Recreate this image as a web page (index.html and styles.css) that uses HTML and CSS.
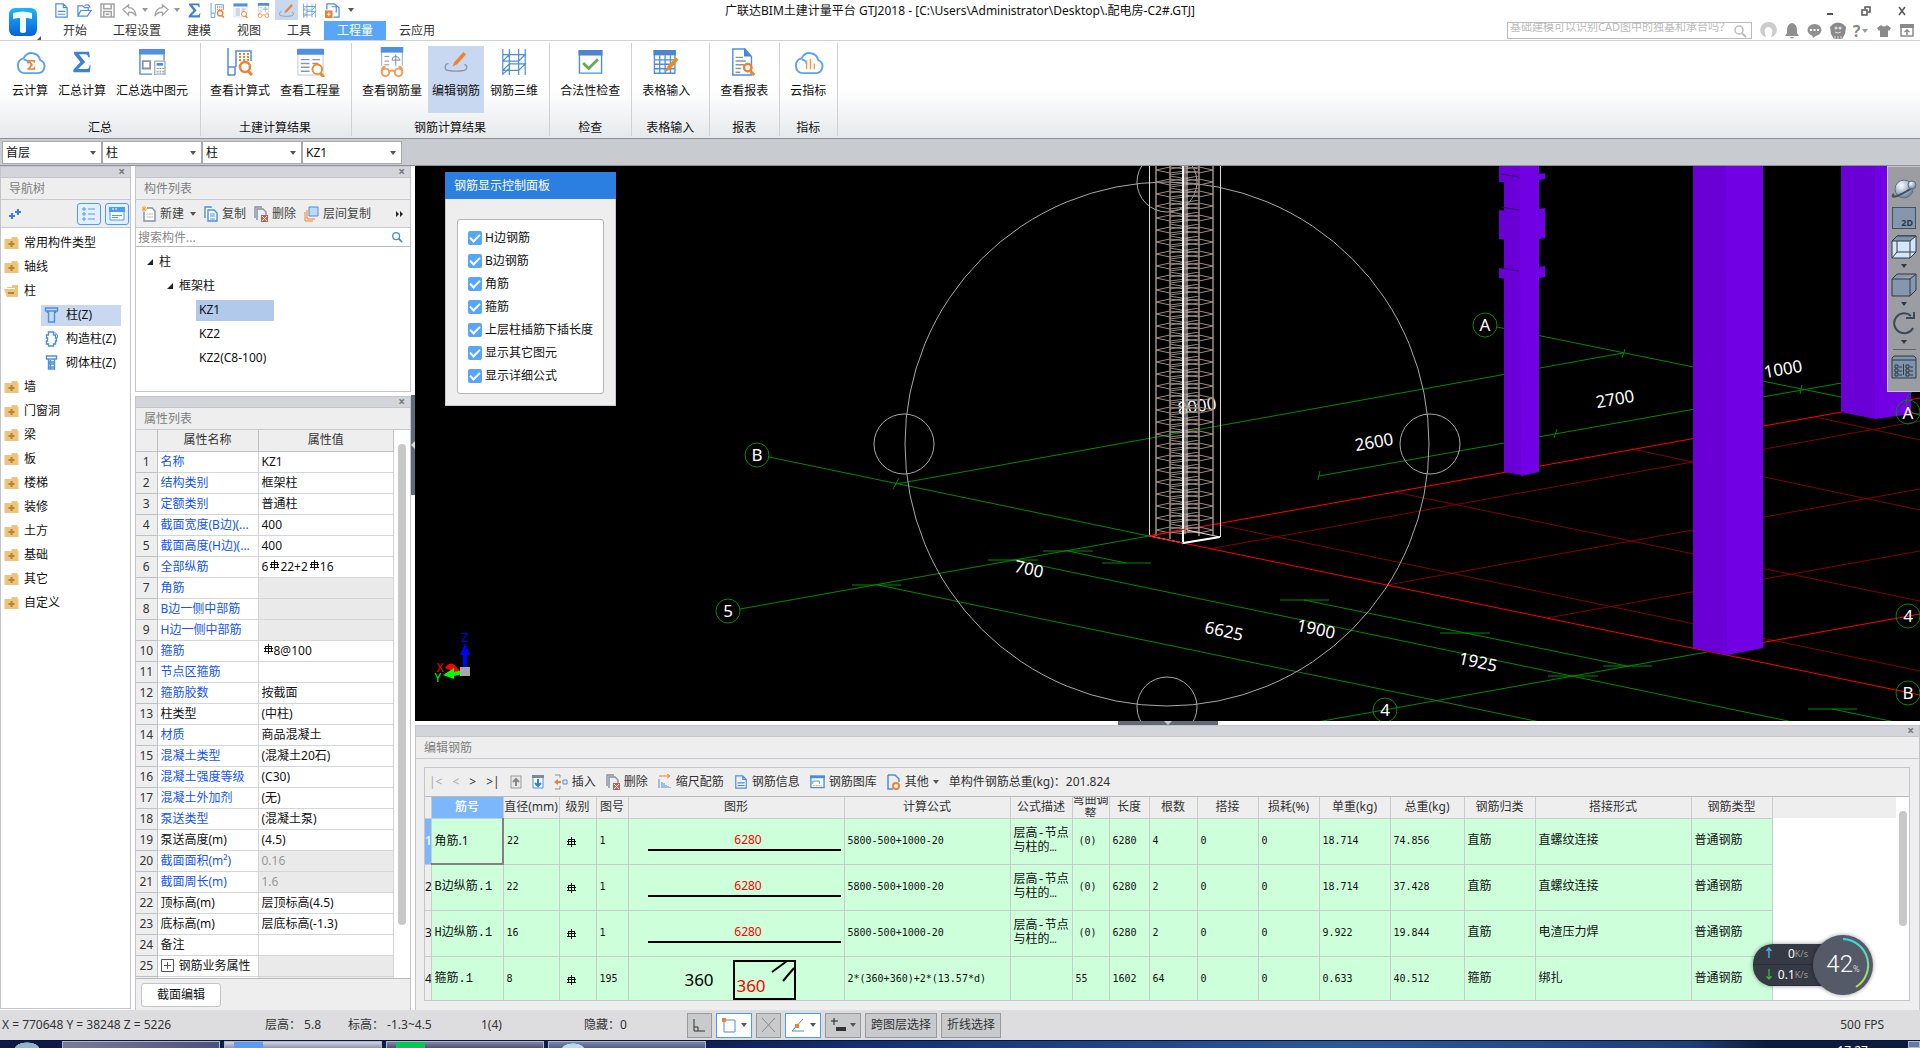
FILE: index.html
```html
<!DOCTYPE html>
<html lang="zh-CN">
<head>
<meta charset="utf-8">
<title>广联达BIM土建计量平台 GTJ2018</title>
<link rel="stylesheet" href="styles.css">
</head>
<body>
<svg class="defs" width="0" height="0" aria-hidden="true">
  <defs>
    <linearGradient id="g-logo" x1="0" y1="0" x2="0" y2="1"><stop offset="0" stop-color="#19b8f8"/><stop offset="1" stop-color="#0a5fd8"/></linearGradient>
    <radialGradient id="g-planet" cx=".35" cy=".3" r=".8"><stop offset="0" stop-color="#fff"/><stop offset=".5" stop-color="#a9b8c8"/><stop offset="1" stop-color="#5f7389"/></radialGradient>
    <linearGradient id="g-arc" x1="0" y1="0" x2="0" y2="1"><stop offset="0" stop-color="#35d6e6"/><stop offset="1" stop-color="#b8e04a"/></linearGradient>
    <pattern id="p-stirrup" patternUnits="userSpaceOnUse" x="1149" y="164" width="72" height="12">
      <g fill="none" stroke="#9a8882" stroke-width="1">
        <path d="M7 6 L21 3 L36 5 M7 6 L21 9 L36 7 M64 6 L50 3 L36 5 M64 6 L50 9 L36 7 M21 0 L50 5 M50 0 L21 5 M21 11 L50 7"/>
      </g>
    </pattern>
    <symbol id="folder" viewBox="0 0 14 14"><path d="M7 1h6v2H7zM0 3h14v10H0z" fill="#ecc57c"/><path d="M7 5v6M4 8h6" stroke="#b5852f" stroke-width="2"/></symbol>
    <symbol id="folder-open" viewBox="0 0 15 14"><path d="M8 1h6v11h-3V4H3V3h5z" fill="#ecc57c"/><path d="M0 5h12l2 8H3z" fill="#ecc57c"/><path d="M4 9h6" stroke="#b5852f" stroke-width="2"/></symbol>
    <symbol id="rebar" viewBox="0 0 10 10"><path d="M5.500 0v10M2.500 2v6M8.500 2v6M2 2.500h7M1 4.500h9M1 7.500h9" fill="none" stroke="#111" stroke-width="1"/></symbol>
    <symbol id="sigma" viewBox="0 0 24 28"><path d="M2 1h19l1 7h-2c-1-4-2-4-5-4H8l8 10-9 9h9c4 0 5-1 6-5h1l-1 9H1v-3l9-10L2 4z" fill="#3f82cf"/></symbol>
    <symbol id="cloud" viewBox="0 0 32 28"><path d="M9 25h15a7 7 0 0 0 2-13.500A9 9 0 0 0 9 9.500 8 8 0 0 0 9 25M9 11q4 0 5 4" fill="none" stroke="#5ba2f0" stroke-width="2"/></symbol>
    <symbol id="calc-lens" viewBox="0 0 28 28"><path d="M2 0v27h7M2 19h7v8M10 19V3h15v10" fill="none" stroke="#4d8edb" stroke-width="1.500"/><path d="M13 6h10M13 9h10M13 12h10" stroke="#f0822e" stroke-width="2" stroke-dasharray="2 2"/><circle cx="19" cy="19" r="5" fill="#fff" stroke="#f0822e" stroke-width="2.500"/><path d="M22 23l4 4" stroke="#f0822e" stroke-width="3"/></symbol>
    <symbol id="doc-lens" viewBox="0 0 30 30"><path d="M2 1h26v27H2z" fill="#fff" stroke="#b9cbe0"/><path d="M1 1h28v6H1z" fill="#5190e0"/><path d="M5 12h9M5 16h9M5 20h9M5 24h9M17 12h8M17 16h6" stroke="#8a96a6" stroke-width="1.500"/><circle cx="22" cy="22" r="5" fill="#fff" stroke="#f0892e" stroke-width="2"/><path d="M25 26l4 4" stroke="#f0892e" stroke-width="3"/></symbol>
    <symbol id="doc-glasses" viewBox="0 0 28 32"><path d="M3 20V1h22v19" fill="#fff" stroke="#7ea6d8"/><path d="M2 0h24v6H2z" fill="#5190e0"/><path d="M6 10h5M6 15h5M6 19h5M18 8v12M14 14q0-4 4-4t4 4M14 14h9" fill="none" stroke="#77889a" stroke-width="1"/><g fill="none" stroke="#f59a55" stroke-width="2"><circle cx="7" cy="27" r="4"/><circle cx="21" cy="27" r="4"/><path d="M11 26q3-2 6 0M3 26q0-5 4-5M25 26q0-5-4-5"/></g></symbol>
    <symbol id="pen" viewBox="0 0 28 24"><path d="M5 14q-4 0-4 4t3 4q10 2 20 0 3-1 3-4t-3-3" fill="none" stroke="#8a95a3" stroke-width="1.500"/><path d="M10 17l2-5L23 0l3 3-11 12z" fill="#f0822e"/></symbol>
    <symbol id="mesh" viewBox="0 0 28 30"><path d="M2 1v28M9 1v28M19 1v28M26 1v28M2 7h24M2 14h17l7-7H9l-7 7M2 24h17l7-7H9l-7 7M2 28l7-6" fill="none" stroke="#4d8edb" stroke-width="1.300"/></symbol>
    <symbol id="check-doc" viewBox="0 0 26 26"><path d="M1 1h24v24H1z" fill="#fff" stroke="#4d8edb" stroke-width="1.500"/><path d="M0 0h26v6H0z" fill="#4a86cf"/><path d="M5 14l6 6L21 10" fill="none" stroke="#6aa84f" stroke-width="3"/></symbol>
    <symbol id="grid-pen" viewBox="0 0 28 28"><path d="M1 1h23v25H1zM1 11h23M1 16h23M1 21h23M7 6v20M13 6v20M19 6v20" fill="none" stroke="#4d8edb" stroke-width="1.500"/><path d="M0 0h25v6H0z" fill="#4a86cf"/><path d="M13 25l2-6L25 8l3 3-10 11z" fill="#f08a1e"/></symbol>
    <symbol id="report" viewBox="0 0 26 30"><path d="M1 1h13l7 8v20H1z" fill="#fff" stroke="#4d8edb" stroke-width="1.500"/><path d="M13 0l8 9h-8z" fill="#4a86cf"/><path d="M4 10h8M4 14h11M4 18h9M4 22h6M4 26h5" stroke="#8a95a3" stroke-width="1.500"/><circle cx="17" cy="21" r="4" fill="#fff" stroke="#f07f2e" stroke-width="2.500"/><path d="M20 25l4 4" stroke="#f07f2e" stroke-width="3"/></symbol>
    <symbol id="sum-sel" viewBox="0 0 30 28"><path d="M15 27H2V1h26v11" fill="#fff" stroke="#4d8edb" stroke-width="1.500"/><path d="M1 0h28v6H1z" fill="#5190e0"/><path d="M5 13h8v8H5z" fill="none" stroke="#8a95a3" stroke-width="2"/><path d="M18 13h11v15H18z" fill="#fff" stroke="#77889a"/><path d="M20 15h7v3h-7z" fill="#4d8edb"/><path d="M20 21h8M20 24h8M20 26h8" stroke="#77889a" stroke-dasharray="2 1"/></symbol>
    <symbol id="page" viewBox="0 0 16 16"><path d="M2 1h8l4 4v10H2zM10 1v4h4M4 9h8M4 12h8" fill="none" stroke="#4d8edb" stroke-width="1.300"/></symbol>
    <symbol id="open" viewBox="0 0 16 16"><path d="M1 14V3h5l2 2h4v3M1 14l3-6h11l-4 6zM8 3q4-3 6 2" fill="none" stroke="#4d8edb" stroke-width="1.300"/></symbol>
    <symbol id="save" viewBox="0 0 16 16"><path d="M1 1h14v14H1zM4 1v5h8V1M4 15V9h8v6M6 12h4" fill="none" stroke="#a5a5a5" stroke-width="1.600"/></symbol>
    <symbol id="undo" viewBox="0 0 16 16"><path d="M1 7l6-5v3q7 0 8 9-3-5-8-4v3z" fill="none" stroke="#a5a5a5" stroke-width="1.400"/></symbol>
    <symbol id="redo" viewBox="0 0 16 16"><path d="M15 7L9 2v3q-7 0-8 9 3-5 8-4v3z" fill="none" stroke="#a5a5a5" stroke-width="1.400"/></symbol>
    <symbol id="page-add" viewBox="0 0 16 16"><path d="M2 7V1h8l5 4v10H9M7 4h5M12 4v6" fill="none" stroke="#4d8edb" stroke-width="1.300"/><path d="M0 8h8v8H0z" fill="#f07f2e"/><path d="M4 10v4M2 12h4" stroke="#fff"/></symbol>
    <symbol id="lens" viewBox="0 0 14 14"><circle cx="6" cy="6" r="4" fill="none" stroke="currentColor" stroke-width="1.500"/><path d="M9 9l4 4" stroke="currentColor" stroke-width="2"/></symbol>
    <symbol id="copy" viewBox="0 0 14 16"><path d="M1 12V1h6v1M4 4h6l3 3v8H4z" fill="#fff" stroke="#4d8edb" stroke-width="1.400"/><path d="M6 8h5M6 10h5M6 13h5" stroke="#4d8edb"/></symbol>
    <symbol id="delete" viewBox="0 0 14 16"><path d="M1 12V1h7M3 14V3h6l3 3v3" fill="none" stroke="#84919e" stroke-width="1.400"/><path d="M7 9h7v7H7z" fill="#d9534f"/><path d="M8 10l5 5M13 10l-5 5" stroke="#fff"/></symbol>
    <symbol id="col" viewBox="0 0 14 16"><path d="M1 1h12v3H1zM4 4v11h6V4M3 4v2M11 4v2" fill="none" stroke="#4d8edb" stroke-width="1.400"/></symbol>
    <symbol id="col-gz" viewBox="0 0 14 16"><path d="M4 1h5v3h2v3h1v3h-1v3H9v2H4v-2H2v-3h1V7H2V4h2z" fill="none" stroke="#4d8edb" stroke-width="1.400"/><path d="M10 1q4 3 3 6" fill="none" stroke="#4d8edb"/></symbol>
    <symbol id="col-qt" viewBox="0 0 14 16"><path d="M2 1h10v3H2zM4 4v10h6V4M4 7h6M4 9h6M4 12h6M6 5v9" fill="none" stroke="#4d8edb" stroke-width="1.400"/></symbol>
  </defs>
</svg>

<header class="top">
  <button class="logo" aria-label="应用菜单"><svg width="46" height="40" viewBox="0 0 46 40"><rect x="9" y="8" width="28" height="28" rx="6" fill="url(#g-logo)"/><path d="M13 13q10-3 19 0v6q-3-1-6-1v14q-3 2-6 0V18q-4 0-7 1z" fill="#f2fbff"/><path d="M41 36v4h-4z" fill="#555"/></svg></button>
  <div class="row-title">
    <div class="quick">
      <button aria-label="新建"><svg><use href="#page"/></svg></button>
      <button aria-label="打开"><svg><use href="#open"/></svg></button>
      <button aria-label="保存"><svg><use href="#save"/></svg></button>
      <button aria-label="撤销" class="wide"><svg><use href="#undo"/></svg><i class="tri"></i></button>
      <button aria-label="恢复" class="wide"><svg><use href="#redo"/></svg><i class="tri"></i></button>
      <button aria-label="汇总"><svg><use href="#sigma"/></svg></button>
      <button aria-label="查看计算式"><svg><use href="#calc-lens"/></svg></button>
      <button aria-label="查看工程量"><svg><use href="#doc-lens"/></svg></button>
      <button aria-label="查看钢筋量"><svg><use href="#doc-glasses"/></svg></button>
      <button aria-label="编辑钢筋" class="on"><svg><use href="#pen"/></svg></button>
      <button aria-label="钢筋三维"><svg><use href="#mesh"/></svg></button>
      <button aria-label="添加"><svg><use href="#page-add"/></svg></button>
      <button aria-label="更多" class="more"><i class="tri dark"></i></button>
    </div>
    <div class="app-title">广联达BIM土建计量平台 GTJ2018 - [C:\Users\Administrator\Desktop\.配电房-C2#.GTJ]</div>
    <div class="win">
      <button aria-label="最小化"><svg width="10" height="10"><path d="M2 8h6" stroke="#555" stroke-width="2"/></svg></button>
      <button aria-label="还原"><svg width="10" height="10"><path d="M1 4h5v5H1zM4 3V1h5v5H7" fill="none" stroke="#555" stroke-width="1.500"/></svg></button>
      <button aria-label="关闭"><svg width="10" height="10"><path d="M2 1l6 8M8 1L2 9" stroke="#555" stroke-width="1.500"/></svg></button>
    </div>
  </div>
  <div class="row-tabs">
    <nav class="tabs">
      <button>开始</button><button>工程设置</button><button>建模</button><button>视图</button><button>工具</button><button class="on">工程量</button><button>云应用</button>
    </nav>
    <div class="help">
      <div class="ask"><textarea aria-label="搜索" rows="2">基础建模可以识别CAD图中的独基和承台吗？
可以识别建模的独基和承台吗识别</textarea><svg width="14" height="14"><use href="#lens"/></svg></div>
      <button aria-label="账号"><svg width="17" height="17" viewBox="0 0 17 17"><path d="M8 0a8 8 0 0 0-5 14l3 1q-2-6-1-8 3-4 7 0 1 3-1 8l3-1A8 8 0 0 0 8 0" fill="#ccc"/></svg></button>
      <button aria-label="通知"><svg width="14" height="16" viewBox="0 0 14 16"><path d="M7 0q5 1 5 7v3l2 3H0l2-3V7q0-6 5-7M5 14h4q-2 3-4 0" fill="#8f8f8f"/></svg></button>
      <button aria-label="消息"><svg width="15" height="15" viewBox="0 0 15 15"><ellipse cx="7.500" cy="7" rx="7" ry="6" fill="#8f8f8f"/><path d="M5 12l1 3 4-3" fill="#8f8f8f"/><path d="M3 7h2M6.500 7h2M10 7h2" stroke="#fff" stroke-width="2"/></svg></button>
      <button aria-label="助手"><svg width="16" height="17" viewBox="0 0 16 17"><path d="M3 2q5-3 10 0l3 3-1 7-3 5H4l-3-5L0 5z" fill="#8a8a8a"/><circle cx="6" cy="6" r="1.500" fill="#ddd"/><circle cx="10" cy="6" r="1.500" fill="#ddd"/><path d="M5 10q3 2 6 0M5 17v-3M8 17v-3M11 17v-3" fill="none" stroke="#ddd"/></svg></button>
      <button aria-label="帮助" class="q">?<i class="tri"></i></button>
      <button aria-label="换肤"><svg width="14" height="14" viewBox="0 0 14 14"><path d="M0 4l4-3q3 3 6 0l4 3-2 3-1-1v7H3V6L2 7z" fill="#8a8a8a"/></svg></button>
      <button aria-label="收起"><svg width="14" height="13" viewBox="0 0 14 13"><path d="M1 1h12v11H1z" fill="none" stroke="#8a8a8a" stroke-width="1.500"/><path d="M0 0h14v4H0z" fill="#8a8a8a"/><path d="M7 11V6M4.500 8L7 6l2.500 2" fill="none" stroke="#8a8a8a" stroke-width="1.500"/></svg></button>
    </div>
  </div>
</header>

<section class="ribbon">
  <div class="grp g1"><div class="btns">
    <button><svg width="31" height="27" viewBox="0 0 32 28"><use href="#cloud"/><svg x="12" y="11" width="10" height="11" viewBox="0 0 24 28"><path d="M2 1h20v7h-3l-2-3H9l7 9-8 9h9l2-4h3v8H1v-3l9-10L2 4z" fill="#f0822e"/></svg></svg>云计算</button>
    <button><svg width="20" height="22"><use href="#sigma"/></svg>汇总计算</button>
    <button><svg width="28" height="26"><use href="#sum-sel"/></svg>汇总选中图元</button></div><span>汇总</span></div>
  <div class="grp g2"><div class="btns">
    <button><svg width="28" height="28"><use href="#calc-lens"/></svg>查看计算式</button>
    <button><svg width="29" height="29"><use href="#doc-lens"/></svg>查看工程量</button></div><span>土建计算结果</span></div>
  <div class="grp"><div class="btns">
    <button><svg width="28" height="30"><use href="#doc-glasses"/></svg>查看钢筋量</button>
    <button class="on"><svg width="24" height="20"><use href="#pen"/></svg>编辑钢筋</button>
    <button><svg width="28" height="28"><use href="#mesh"/></svg>钢筋三维</button></div><span>钢筋计算结果</span></div>
  <div class="grp"><div class="btns"><button><svg width="25" height="24"><use href="#check-doc"/></svg>合法性检查</button></div><span>检查</span></div>
  <div class="grp g5"><div class="btns"><button><svg width="28" height="25"><use href="#grid-pen"/></svg>表格输入</button></div><span>表格输入</span></div>
  <div class="grp"><div class="btns"><button><svg width="26" height="28"><use href="#report"/></svg>查看报表</button></div><span>报表</span></div>
  <div class="grp"><div class="btns"><button><svg width="31" height="27" viewBox="0 0 32 28"><use href="#cloud"/><path d="M14 12v9M18 10v11M22 15v6" stroke="#f59a55" stroke-width="1.500"/></svg>云指标</button></div><span>指标</span></div>
</section>

<div class="pickers">
  <label><select aria-label="楼层"><option>首层</option></select></label>
  <label><select aria-label="类别"><option>柱</option></select></label>
  <label><select aria-label="类型"><option>柱</option></select></label>
  <label><select aria-label="构件"><option>KZ1</option></select></label>
</div>

<main class="work">
  <aside class="panel nav">
    <div class="strip"><button aria-label="关闭">×</button></div>
    <h2>导航树</h2>
    <div class="tools">
      <svg class="plus" width="14" height="12" viewBox="0 0 14 12"><path d="M4 5v6M1 8h6M10 1v6M7 4h6" stroke="#3b7dd0" stroke-width="2"/></svg>
      <button class="vbtn push" aria-label="列表"><svg width="14" height="16" viewBox="0 0 14 16"><path d="M1 2h2v2H1zM1 7h2v2H1zM1 12h2v2H1zM6 3h7M6 8h7M6 13h7" fill="none" stroke="#4d9bf5"/></svg></button>
      <button class="vbtn" aria-label="图标"><svg width="16" height="14" viewBox="0 0 16 14"><path d="M1 1h14v12H1z" fill="#fff" stroke="#4d9bf5"/><path d="M0 0h16v5H0zM3 8h10v1H3zM3 10h6v1H3z" fill="#4d9bf5"/><path d="M3 2h6" stroke="#fff" stroke-dasharray="2 1"/></svg></button>
    </div>
    <ul class="tree">
      <li><svg><use href="#folder"/></svg>常用构件类型</li>
      <li><svg><use href="#folder"/></svg>轴线</li>
      <li><svg><use href="#folder-open"/></svg>柱</li>
      <li class="kid"><a href="#z" class="on"><svg><use href="#col"/></svg>柱(Z)</a></li>
      <li class="kid"><a href="#gz"><svg><use href="#col-gz"/></svg>构造柱(Z)</a></li>
      <li class="kid"><a href="#qt"><svg><use href="#col-qt"/></svg>砌体柱(Z)</a></li>
      <li><svg><use href="#folder"/></svg>墙</li>
      <li><svg><use href="#folder"/></svg>门窗洞</li>
      <li><svg><use href="#folder"/></svg>梁</li>
      <li><svg><use href="#folder"/></svg>板</li>
      <li><svg><use href="#folder"/></svg>楼梯</li>
      <li><svg><use href="#folder"/></svg>装修</li>
      <li><svg><use href="#folder"/></svg>土方</li>
      <li><svg><use href="#folder"/></svg>基础</li>
      <li><svg><use href="#folder"/></svg>其它</li>
      <li><svg><use href="#folder"/></svg>自定义</li>
    </ul>
  </aside>

  <div class="mid">
    <section class="panel comp">
      <div class="strip"><button aria-label="关闭">×</button></div>
      <h2>构件列表</h2>
      <div class="tools ctools">
        <button><svg width="14" height="16" viewBox="0 0 14 16"><path d="M5 2h5l3 3v10H2V6" fill="#fff" stroke="#84919e" stroke-width="1.400"/><path d="M0 1l4 4M4 1L0 5M2 0v6M0 3h5" stroke="#f0a030"/><path d="M5 8h6M5 11h6" stroke="#b8c0c8"/></svg>新建<i class="tri dark"></i></button>
        <button><svg width="14" height="16"><use href="#copy"/></svg>复制</button>
        <button><svg width="14" height="16"><use href="#delete"/></svg>删除</button>
        <button><svg width="15" height="16" viewBox="0 0 15 16"><path d="M5 1h9v9H5z" fill="#bcd9ff" stroke="#4d8edb"/><path d="M1 6v9h8M3 4v9h8" fill="none" stroke="#f0822e"/></svg>层间复制</button>
        <button class="push" aria-label="更多"><svg width="8" height="8"><path d="M0 1l3 3-3 3zM4 1l3 3-3 3z" fill="#222"/></svg></button>
      </div>
      <div class="find"><input type="text" aria-label="搜索构件" placeholder="搜索构件..."><svg width="12" height="12"><use href="#lens"/></svg></div>
      <ul class="list">
        <li class="l1"><i class="fold"></i>柱</li>
        <li class="l2"><i class="fold"></i>框架柱</li>
        <li class="l3"><a href="#kz1" class="on">KZ1</a></li>
        <li class="l3"><a href="#kz2">KZ2</a></li>
        <li class="l3"><a href="#kz2c">KZ2(C8-100)</a></li>
      </ul>
    </section>

    <section class="panel props">
      <div class="strip"><button aria-label="关闭">×</button></div>
      <h2>属性列表</h2>
      <div class="pwrap">
        <table class="ptab">
          <colgroup><col class="pn"><col class="pk"><col class="pv"></colgroup>
          <thead><tr><th></th><th>属性名称</th><th>属性值</th></tr></thead>
          <tbody>
            <tr><th>1</th><td class="b">名称</td><td>KZ1</td></tr>
            <tr><th>2</th><td class="b">结构类别</td><td>框架柱</td></tr>
            <tr><th>3</th><td class="b">定额类别</td><td>普通柱</td></tr>
            <tr><th>4</th><td class="b">截面宽度(B边)(...</td><td>400</td></tr>
            <tr><th>5</th><td class="b">截面高度(H边)(...</td><td>400</td></tr>
            <tr><th>6</th><td class="b">全部纵筋</td><td>6<svg class="rb"><use href="#rebar"/></svg>22+2<svg class="rb"><use href="#rebar"/></svg>16</td></tr>
            <tr><th>7</th><td class="b">角筋</td><td class="off"></td></tr>
            <tr><th>8</th><td class="b">B边一侧中部筋</td><td class="off"></td></tr>
            <tr><th>9</th><td class="b">H边一侧中部筋</td><td class="off"></td></tr>
            <tr><th>10</th><td class="b">箍筋</td><td><svg class="rb"><use href="#rebar"/></svg>8@100</td></tr>
            <tr><th>11</th><td class="b">节点区箍筋</td><td></td></tr>
            <tr><th>12</th><td class="b">箍筋胶数</td><td>按截面</td></tr>
            <tr><th>13</th><td>柱类型</td><td>(中柱)</td></tr>
            <tr><th>14</th><td class="b">材质</td><td>商品混凝土</td></tr>
            <tr><th>15</th><td class="b">混凝土类型</td><td>(混凝土20石)</td></tr>
            <tr><th>16</th><td class="b">混凝土强度等级</td><td>(C30)</td></tr>
            <tr><th>17</th><td class="b">混凝土外加剂</td><td>(无)</td></tr>
            <tr><th>18</th><td class="b">泵送类型</td><td>(混凝土泵)</td></tr>
            <tr><th>19</th><td>泵送高度(m)</td><td>(4.5)</td></tr>
            <tr><th>20</th><td class="b">截面面积(m²)</td><td class="off">0.16</td></tr>
            <tr><th>21</th><td class="b">截面周长(m)</td><td class="off">1.6</td></tr>
            <tr><th>22</th><td>顶标高(m)</td><td>层顶标高(4.5)</td></tr>
            <tr><th>23</th><td>底标高(m)</td><td>层底标高(-1.3)</td></tr>
            <tr><th>24</th><td>备注</td><td></td></tr>
            <tr><th>25</th><td><svg class="exp" width="13" height="13"><path d="M.5 .5h12v12H.5zM3 6.500h7M6.500 3v7" fill="none" stroke="#555"/></svg>钢筋业务属性</td><td class="off"></td></tr>
            <tr><th></th><td></td><td class="off"></td></tr>
          </tbody>
        </table>
        <div class="gutter"><i class="thumb"></i></div>
      </div>
      <div class="pfoot"><button>截面编辑</button></div>
    </section>
  </div>
  <div class="vsplit"><button aria-label="折叠"><svg width="4" height="8"><path d="M4 0v8L0 4z" fill="#ddd"/></svg></button></div>

  <div class="right">
    <section class="view">
      <svg class="scene" viewBox="415 166 1505 556" preserveAspectRatio="xMinYMin slice">
        <g stroke="#008a00" fill="none" stroke-width="1">
          <path d="M769 457L1149 536M740 609L1149 536M896 484L1623 353M893 489L899 478M1319 476L1920 369M1318 480L1320 471M1554 438L1557 429M1622 358L1625 349M1800 394L1802 385M1497 327L1900 409M878 585L1540 722M1013 560L1793 722M1068 551L1126 563M1304 600L1627 666M1832 709L1895 722M1317 722L1707 652"/>
          <path d="M1043 551h50M988 560h50M1102 563h49M852 585h49M1280 600h49M1440 633h50M1603 666h49M1548 676h50M1808 709h49"/>
        </g>
        <g stroke="#820000" fill="none" stroke-width="1">
          <path d="M1215 524L1920 671M1395 492L1920 601M1632 449L1920 510M1816 417L1920 440M1209 549L1920 421M1387 585L1920 489M1547 618L1920 551"/>
        </g>
        <path d="M1149 536L1920 398M1149 536L1920 695M1727 649L1920 614M1912 413l8 2" stroke="#f00" fill="none"/>
        <g fill="none" stroke="#a8a8a8"><circle cx="1167" cy="444" r="262"/><circle cx="904" cy="444" r="30"/><circle cx="1430" cy="444" r="30"/><circle cx="1167" cy="182" r="30"/><circle cx="1167" cy="707" r="30"/></g>
        <text x="1197" y="412" class="dim" transform="rotate(-8 1197 406)">8000</text>
        <rect x="1149" y="166" width="72" height="368" fill="url(#p-stirrup)"/>
        <path d="M1156 166v370M1170 166v373M1185 166v368M1199 166v370M1213 166v369" stroke="#a08e88" stroke-width="1.500"/>
        <path d="M1149.500 166V536L1183 543L1220 537M1187 530L1220 537M1187 166V530" fill="none" stroke="#ddd"/>
        <path d="M1183 166V543L1220 537" fill="none" stroke="#fff" stroke-width="2"/>
        <path d="M1220.500 166V537" stroke="#ddd"/>
        <path d="M1149 536L1185 529M1149 536L1183 543" stroke="#f00"/>
        <g>
          <path d="M1504 166h17v309l-17-3z M1499 166h22v16h-22z M1499 210l22 3v29l-22-3z M1499 268l22 3v10l-22-3z" fill="#6a00d6"/>
          <path d="M1520 166h19v306l-18 4z M1539 174l6-1v6l-6 1z M1520 211l19-2 6-1v30l-25 4z M1520 269l19-2 6-1v11l-25 4z" fill="#7200e4"/>
          <path d="M1501 174l18 3M1501 207l18 3M1501 268l18 3" stroke="#35006c"/>
          <path d="M1693 166h34v489l-34-7z M1841 166h34v253l-34-7z" fill="#6a00d6"/>
          <path d="M1726 166h37v482l-36 7z M1875 166h36v248l-36 5z" fill="#7200e4"/>
        </g>
        <g fill="none" stroke="#008a00"><circle cx="757" cy="455" r="12"/><circle cx="728" cy="611" r="12"/><circle cx="1485" cy="325" r="12"/><circle cx="1385" cy="710" r="12"/><circle cx="1908" cy="412" r="12"/><circle cx="1918" cy="402" r="12"/><circle cx="1908" cy="616" r="12"/><circle cx="1908" cy="693" r="12"/></g>
        <g class="dim">
          <text x="757" y="461">B</text><text x="728" y="617">5</text><text x="1485" y="331">A</text><text x="1385" y="716">4</text><text x="1908" y="419">A</text><text x="1908" y="622">4</text><text x="1908" y="699">B</text>
          <text x="1374" y="448" transform="rotate(-10 1374 442)">2600</text>
          <text x="1615" y="405" transform="rotate(-10 1615 399)">2700</text>
          <text x="1783" y="375" transform="rotate(-10 1783 369)">1000</text>
          <text x="1029" y="575" transform="rotate(12 1029 569)">700</text>
          <text x="1224" y="637" transform="rotate(12 1224 631)">6625</text>
          <text x="1316" y="635" transform="rotate(12 1316 629)">1900</text>
          <text x="1478" y="668" transform="rotate(12 1478 662)">1925</text>
        </g>
        <path d="M463 668V655h-3l5-12 5 12h-3v13z" fill="#00f"/><path d="M445 668q6-9 12 0l3 3-3 2z" fill="#f00"/><path d="M443 675l11-7v4l9-2v4l-9 2v3z" fill="#0f0"/><path d="M460 667h10v9h-10z" fill="#a8a8a8"/>
        <text x="465" y="642" fill="#00f" class="ax">Z</text><text x="440" y="672" fill="#f00" class="ax">X</text><text x="438" y="682" fill="#0f0" class="ax">Y</text>
      </svg>

      <form class="dialog">
        <h3>钢筋显示控制面板</h3>
        <div class="checks">
          <label><input type="checkbox" checked>H边钢筋</label>
          <label><input type="checkbox" checked>B边钢筋</label>
          <label><input type="checkbox" checked>角筋</label>
          <label><input type="checkbox" checked>箍筋</label>
          <label><input type="checkbox" checked>上层柱插筋下插长度</label>
          <label><input type="checkbox" checked>显示其它图元</label>
          <label><input type="checkbox" checked>显示详细公式</label>
        </div>
      </form>

      <div class="vtools">
        <button aria-label="三维动态"><svg width="26" height="24" viewBox="0 0 26 24"><circle cx="13" cy="12" r="9" fill="url(#g-planet)" stroke="#5b6f86"/><path d="M3 17q-4 4 3 2 10-4 17-10" fill="none" stroke="#44525f" stroke-width="2"/><circle cx="21" cy="8" r="4" fill="url(#g-planet)" stroke="#5b6f86"/></svg></button>
        <button aria-label="二维" class="two"><span>2D</span></button>
        <button aria-label="线框"><svg width="26" height="24" viewBox="0 0 26 24"><path d="M1 6l5-5h19v16l-6 6H1z" fill="#d4e6fb" stroke="#2f3a48"/><path d="M1 6l5-5h19l-6 5z" fill="#7f93ab" stroke="#2f3a48"/><path d="M19 6v17M6 6v11h13M6 17l-5 6M19 17l6 0" fill="none" stroke="#2f3a48"/></svg></button>
        <i class="tri ink"></i>
        <button aria-label="实体"><svg width="26" height="24" viewBox="0 0 26 24"><path d="M1 6l5-5h19v16l-6 6H1zM1 6h18l6-5M19 6v17" fill="#8497ad" stroke="#2f3a48"/></svg></button>
        <i class="tri ink"></i>
        <button aria-label="旋转"><svg width="26" height="24" viewBox="0 0 26 24"><path d="M20 5A10 10 0 1 0 22 17" fill="none" stroke="#3c4a58" stroke-width="2"/><path d="M15 7h8V1" fill="none" stroke="#3c4a58" stroke-width="2"/></svg></button>
        <i class="tri ink"></i>
        <hr>
        <button aria-label="显示设置"><svg width="26" height="24" viewBox="0 0 26 24"><path d="M1 3l2-2h20l2 2v20H1z" fill="#7f93ab" stroke="#2f3a48"/><path d="M1 5h24M12.500 9v11M8 12h3M8 16h3M8 20h3M19 12h3M19 16h3M19 20h3" stroke="#2f3a48"/><path d="M4 10h3v3H4zM4 14h3v3H4zM4 18h3v3H4zM15 10h3v3h-3zM15 14h3v3h-3zM15 18h3v3h-3z" fill="none" stroke="#2f3a48"/></svg></button>
      </div>
    </section>
    <div class="hsplit"><button aria-label="折叠"><svg width="8" height="4"><path d="M0 0h8L4 4z" fill="#ccc"/></svg></button></div>

    <section class="panel edit">
      <div class="strip"><button aria-label="关闭">×</button></div>
      <h2>编辑钢筋</h2>
      <div class="ebox">
        <div class="etools">
          <button class="dim-b" aria-label="首条">|&lt;</button><button class="dim-b" aria-label="上一条">&lt;</button><button aria-label="下一条">&gt;</button><button aria-label="末条">&gt;|</button>
          <button aria-label="上移"><svg width="12" height="14" viewBox="0 0 12 14"><path d="M1 1h10v12H1z" fill="#e8e8e8" stroke="#9a9a9a"/><path d="M6 11V4M3 7l3-3 3 3" fill="none" stroke="#888" stroke-width="2"/></svg></button>
          <button aria-label="下移"><svg width="12" height="14" viewBox="0 0 12 14"><path d="M1 1h10v12H1z" fill="#fff" stroke="#4d8edb"/><path d="M0 0h12v3H0z" fill="#7a8b9c"/><path d="M6 4v7M3 8l3 3 3-3" fill="none" stroke="#2f7fe0" stroke-width="2"/></svg></button>
          <button><svg width="14" height="16" viewBox="0 0 14 16"><path d="M1 1h5v3M1 15h5v-3" fill="none" stroke="#84919e"/><path d="M0 8l4-3v2h3v2H4v2z" fill="#f0822e"/><path d="M9 6h4v4H9z" fill="none" stroke="#4d8edb"/></svg>插入</button>
          <button><svg width="14" height="16"><use href="#delete"/></svg>删除</button>
          <button><svg width="14" height="16" viewBox="0 0 14 16"><path d="M1 2h11M9 0l3 2-3 2" fill="none" stroke="#f0822e"/><path d="M1 5v9M4 8v6M6 9v5M8 11v3M10 12v2M12 13v1" stroke="#4d8edb"/></svg>缩尺配筋</button>
          <button><svg width="14" height="16"><use href="#page"/></svg>钢筋信息</button>
          <button><svg width="15" height="14" viewBox="0 0 16 14"><path d="M1 1h14v12H1z" fill="#fff" stroke="#4d8edb" stroke-width="1.500"/><path d="M0 0h16v3H0z" fill="#4d8edb"/><path d="M3 9V6h7v3" fill="none" stroke="#4d8edb"/><path d="M3 11h10" stroke="#f0822e" stroke-dasharray="2 1"/></svg>钢筋图库</button>
          <button><svg width="14" height="16" viewBox="0 0 14 16"><path d="M1 1h7l4 4v3M1 1v14h5" fill="none" stroke="#4d8edb" stroke-width="1.500"/><circle cx="9" cy="12" r="3" fill="#fff" stroke="#f0822e" stroke-width="2"/></svg>其他<i class="tri dark"></i></button>
          <span>单构件钢筋总重(kg)：201.824</span>
        </div>
        <div class="ewrap">
          <div class="escroll">
          <table class="etab">
            <colgroup><col class="c0"><col class="c1"><col class="c2"><col class="c3"><col class="c4"><col class="c5"><col class="c6"><col class="c7"><col class="c3"><col class="c9"><col class="c10"><col class="c11"><col class="c11"><col class="c12"><col class="c13"><col class="c12"><col class="c14"><col class="c15"></colgroup>
            <thead><tr><th></th><th class="sel">筋号</th><th>直径(mm)</th><th>级别</th><th>图号</th><th>图形</th><th>计算公式</th><th>公式描述</th><th><div class="clip">弯曲调整</div></th><th>长度</th><th>根数</th><th>搭接</th><th>损耗(%)</th><th>单重(kg)</th><th>总重(kg)</th><th>钢筋归类</th><th>搭接形式</th><th>钢筋类型</th></tr></thead>
            <tbody>
              <tr><th class="sel">1</th><td class="cur">角筋.1</td><td class="n">22</td><td class="g"><svg><use href="#rebar"/></svg></td><td class="n">1</td><td class="fig"><svg width="215" height="45"><text x="119" y="25" class="red">6280</text><path d="M19 31H212" stroke="#000" stroke-width="2"/></svg></td><td class="n">5800-500+1000-20</td><td>层高-节点与柱的…</td><td class="n mid-c">(0)</td><td class="n">6280</td><td class="n">4</td><td class="n">0</td><td class="n">0</td><td class="n">18.714</td><td class="n">74.856</td><td>直筋</td><td>直螺纹连接</td><td>普通钢筋</td></tr>
              <tr><th>2</th><td>B边纵筋.1</td><td class="n">22</td><td class="g"><svg><use href="#rebar"/></svg></td><td class="n">1</td><td class="fig"><svg width="215" height="45"><text x="119" y="25" class="red">6280</text><path d="M19 31H212" stroke="#000" stroke-width="2"/></svg></td><td class="n">5800-500+1000-20</td><td>层高-节点与柱的…</td><td class="n mid-c">(0)</td><td class="n">6280</td><td class="n">2</td><td class="n">0</td><td class="n">0</td><td class="n">18.714</td><td class="n">37.428</td><td>直筋</td><td>直螺纹连接</td><td>普通钢筋</td></tr>
              <tr><th>3</th><td>H边纵筋.1</td><td class="n">16</td><td class="g"><svg><use href="#rebar"/></svg></td><td class="n">1</td><td class="fig"><svg width="215" height="45"><text x="119" y="25" class="red">6280</text><path d="M19 31H212" stroke="#000" stroke-width="2"/></svg></td><td class="n">5800-500+1000-20</td><td>层高-节点与柱的…</td><td class="n mid-c">(0)</td><td class="n">6280</td><td class="n">2</td><td class="n">0</td><td class="n">0</td><td class="n">9.922</td><td class="n">19.844</td><td>直筋</td><td>电渣压力焊</td><td>普通钢筋</td></tr>
              <tr><th>4</th><td>箍筋.1</td><td class="n">8</td><td class="g"><svg><use href="#rebar"/></svg></td><td class="n">195</td><td class="fig"><svg width="215" height="45"><text x="70" y="29" class="big">360</text><path d="M105 4h61v38h-61z" fill="none" stroke="#000" stroke-width="2"/><path d="M143 15L158 4M154 24L165 11" stroke="#000" stroke-width="2"/><text x="122" y="35" class="big red">360</text></svg></td><td class="n">2*(360+360)+2*(13.57*d)</td><td></td><td class="n">55</td><td class="n">1602</td><td class="n">64</td><td class="n">0</td><td class="n">0</td><td class="n">0.633</td><td class="n">40.512</td><td>箍筋</td><td>绑扎</td><td>普通钢筋</td></tr>
            </tbody>
          </table>
          </div>
          <div class="gutter"><i class="thumb"></i></div>
        </div>
      </div>
    </section>
  </div>
</main>

<footer class="status">
  <span class="s1">X = 770648 Y = 38248 Z = 5226</span><span class="s2">层高： 5.8</span><span class="s3">标高： -1.3~4.5</span><span class="s4">1(4)</span><span class="s4">隐藏：0</span>
  <button aria-label="正交"><svg width="15" height="14"><path d="M2 1v12h11M2 9h4v4" fill="none" stroke="#333"/></svg></button>
  <button class="on" aria-label="捕捉"><svg width="16" height="16"><path d="M3 3h11v12H3z" fill="none" stroke="#4d8edb"/><path d="M1 1h4v4H1z" fill="#f0822e"/></svg><i class="tri dark"></i></button>
  <button aria-label="交点"><svg width="15" height="16"><path d="M1 1l13 14M14 1L1 15" stroke="#888"/></svg></button>
  <button class="on" aria-label="极轴"><svg width="16" height="16"><path d="M13 2L2 14h12" fill="none" stroke="#4d8edb"/><path d="M5 7h4v4H5z" fill="#f0822e"/></svg><i class="tri dark"></i></button>
  <button aria-label="动态输入"><svg width="16" height="16"><path d="M4 1v7M1 4h7" stroke="#222"/><path d="M6 10h10v4H6z" fill="#333"/></svg><i class="tri dark"></i></button>
  <button class="word">跨图层选择</button>
  <button class="word">折线选择</button>
  <span class="fps">500 FPS</span>
</footer>
<div class="taskbar">
  <i class="orb"></i><i class="task"></i><i class="task blue"></i><i class="task green"></i><i class="task ring"></i><time>17:27</time><i class="peek"></i>
</div>

<div class="meter">
  <div class="rates"><p><b class="up">↑</b>0<small>K/s</small></p><p><b class="down">↓</b>0.1<small>K/s</small></p></div>
  <div class="dial"><svg width="60" height="60"><path d="M30 4A26 26 0 0 1 43 52" fill="none" stroke="url(#g-arc)" stroke-width="2"/></svg><span>42<small>%</small></span></div>
</div>
</body>
</html>
```

FILE: styles.css
```css
* { box-sizing: border-box; }
body { margin: 0; height: 100vh; display: flex; flex-direction: column; overflow: hidden; background: #fff; color: #111; font: 12px/16px "Noto Sans", "Noto Sans CJK SC", sans-serif; }
button, input, select, textarea { font: inherit; color: inherit; margin: 0; padding: 0; border: 0; background: none; }
button { display: flex; align-items: center; justify-content: center; white-space: nowrap; }
ul, p, h2, h3 { margin: 0; padding: 0; list-style: none; font-size: 12px; font-weight: 400; }
a { color: inherit; text-decoration: none; }
svg { flex: none; display: block; }
.defs { position: absolute; }
.tri { width: 0; height: 0; border: 3px solid transparent; border-top: 4px solid #999; border-bottom: 0; }
.tri.dark { border-top-color: #555; }
.push { margin-left: auto; }

/* title bar and tabs */
.top { position: relative; border-bottom: 1px solid #d0d2d4; flex: none; }
.logo { position: absolute; left: 0; top: 0; }
.row-title { display: grid; grid-template-columns: 1fr auto 1fr; height: 21px; }
.quick { display: flex; padding-left: 50px; height: 20px; }
.quick button { width: 23px; height: 20px; }
.quick svg { width: 15px; height: 15px; }
.quick .wide { width: 32px; gap: 5px; }
.quick .more { width: 14px; }
.on { background: #c7d8f0; }
.app-title { line-height: 22px; }
.win { display: flex; justify-content: flex-end; }
.win button { width: 36px; }
.row-tabs { display: flex; justify-content: space-between; height: 19px; }
.tabs { display: flex; padding-left: 50px; }
.tabs button { padding: 0 13px; color: #333; height: 19px; }
.tabs .on { background: #58a6f8; color: #fff; }
.help { display: flex; padding-right: 2px; }
.help button { width: 23px; height: 19px; }
.help .q { font-size: 16px; font-weight: 700; color: #888; gap: 2px; }
.ask { width: 245px; height: 17px; margin: 1px 5px 0 0; border: 1px solid #bbb; overflow: hidden; display: flex; justify-content: space-between; color: #bbb; }
.ask textarea { width: 225px; height: 34px; margin-top: -5px; padding-left: 2px; font-size: 11px; line-height: 17px; resize: none; overflow: hidden; white-space: pre; flex: none; }
.ask svg { margin: 1px 4px 0 0; }

/* ribbon */
.ribbon { display: flex; flex: none; height: 98px; padding: 2px 0; background: linear-gradient(#fff 50%, #e6e9eb); border-bottom: 1px solid #8e9296; }
.grp { display: flex; flex-direction: column; justify-content: space-between; padding: 3px 7px 0 6px; border-right: 1px solid #cfd2d4; }
.g1 { padding-left: 8px; padding-right: 8px; }
.g2 { padding-left: 5px; }
.g5 { width: 78px; }
.grp > span { text-align: center; line-height: 16px; }
.btns { display: flex; gap: 2px; }
.btns button { flex-direction: column; height: 67px; padding: 0 4px 14px; gap: 5px; }
.btns svg { margin: auto; }

.pickers { display: flex; flex: none; height: 27px; padding: 2px; background: #c8cbd0; border-bottom: 1px solid #8e9296; }
.pickers label { position: relative; width: 100px; }
.pickers select { appearance: none; width: 100px; height: 23px; padding: 0 3px; background: #fff; border: 1px solid #a9a9a9; }
.pickers label::after { content: ""; position: absolute; right: 6px; top: 10px; border: 3px solid transparent; border-top: 4px solid #555; border-bottom: 0; }

/* docked panels */
.work { flex: 1; min-height: 0; display: grid; grid-template-columns: 131px 280px 4px minmax(0, 1fr); }
.panel { display: flex; flex-direction: column; border: 1px solid #c3c5ca; border-width: 0 1px; background: #fff; min-height: 0; }
.strip { height: 12px; flex: none; background: #d3d5da; border: 1px solid #c3c5ca; border-width: 1px 0; display: flex; justify-content: flex-end; padding-right: 5px; }
.strip button { line-height: 10px; font-weight: 700; color: #777; }
.panel h2 { height: 22px; flex: none; padding-left: 8px; line-height: 22px; background: #eee; border-bottom: 1px solid #c8cacf; color: #808080; }
.tools { height: 28px; flex: none; display: flex; align-items: center; padding: 0 1px 0 7px; background: #eee; border-bottom: 1px solid #c8cacf; gap: 4px; }
.vbtn { width: 24px; height: 22px; border: 1px solid #4d9bf5; border-radius: 3px; background: #e3effd; }
.nav { margin-bottom: 1px; border-bottom-width: 1px; }
.tree { padding-top: 3px; }
.tree li { height: 24px; display: flex; align-items: center; gap: 5px; padding-left: 3px; }
.tree svg { width: 15px; height: 14px; }
.tree .kid { padding-left: 40px; }
.tree a { display: flex; align-items: center; gap: 7px; width: 80px; height: 21px; padding-left: 3px; white-space: nowrap; }
.tree a svg { height: 16px; }

.mid { display: flex; flex-direction: column; gap: 4px; min-height: 0; margin-left: 4px; }
.comp { height: 226px; flex: none; border-bottom-width: 1px; }
.ctools { padding: 0 6px; gap: 8px; color: #444; }
.ctools button { gap: 4px; }
.ctools .tri { margin-left: 2px; }
.find { height: 19px; flex: none; display: flex; align-items: center; border-bottom: 1px solid #b8babd; padding: 0 7px 0 2px; color: #3f8fd0; }
.find input { flex: 1; height: 18px; min-width: 0; }
.find input::placeholder { color: #888; }
.list { padding-top: 3px; }
.list li { height: 24px; display: flex; align-items: center; gap: 6px; }
.l1 { padding-left: 11px; }
.l2 { padding-left: 31px; }
.l3 { padding-left: 60px; }
.list a { min-width: 78px; height: 21px; line-height: 20px; padding-left: 3px; }
.list .on { background: #b1caec; }
.fold { width: 0; height: 0; border-left: 6px solid transparent; border-bottom: 6px solid #222; }

.props { flex: 1; background: #eee; }
.pwrap { flex: 1; min-height: 0; display: flex; overflow: hidden; background: #fff; border-bottom: 1px solid #b8babd; }
table { border-collapse: collapse; table-layout: fixed; }
.ptab { width: 258px; flex: none; align-self: flex-start; }
.pn { width: 21px; }
.pk { width: 101px; }
.ptab th, .ptab td { height: 21px; padding: 0 0 0 3px; line-height: 20px; border: 1px solid #d3d5d8; border-width: 0 1px 1px 0; text-align: left; white-space: nowrap; overflow: hidden; font-weight: 400; }
.ptab th { background: #eee; padding: 0; text-align: center; color: #333; border-color: #bfc1c5; }
.ptab .b { color: #1556f0; }
.ptab .off { background: #eaeaea; color: #999; }
.rb { display: inline-block; width: 10px; height: 10px; margin: 0 1px; vertical-align: 1px; }
.exp { display: inline-block; margin-right: 5px; vertical-align: -2px; background: #fff; }
.gutter { flex: 1; display: flex; justify-content: center; padding: 14px 0 53px; }
.thumb { width: 8px; border-radius: 4px; background: #c8c8c8; }
.pfoot { flex: none; height: 31px; padding: 4px 5px; }
.pfoot button { width: 80px; height: 24px; background: #fff; border: 1px solid #c5c5c5; border-radius: 3px; }

/* 3D view */
.vsplit { padding-top: 229px; }
.vsplit button { width: 4px; height: 100px; background: #5f6b77; }
.right { display: flex; flex-direction: column; min-height: 0; min-width: 0; }
.view { position: relative; flex: 1; min-height: 0; background: #000; overflow: hidden; }
.scene { position: absolute; inset: 0; width: 100%; height: 100%; }
.dim { font: 17px "Noto Sans", sans-serif; fill: #fff; text-anchor: middle; }
.ax { font: 12px "Noto Sans", sans-serif; text-anchor: middle; }
.dialog { position: absolute; left: 30px; top: 6px; width: 171px; padding-bottom: 11px; background: #eee; border: 1px solid #c3cbd3; border-top: 0; }
.dialog h3 { margin: 0 -1px; padding-left: 9px; line-height: 27px; background: #2b7fe0; color: #fff; }
.checks { margin: 20px 11px 0; padding: 6px 10px; border: 1px solid #b5b5b5; border-radius: 3px; background: #fff; }
.checks label { display: flex; align-items: center; gap: 3px; height: 23px; white-space: nowrap; }
.checks input { appearance: none; width: 14px; height: 14px; border-radius: 2px; background: #58a6f8; display: grid; place-items: center; }
.checks input::before { content: ""; width: 8px; height: 4px; border: solid #fff; border-width: 0 0 2px 2px; rotate: -45deg; margin-bottom: 2px; }
.vtools { position: absolute; right: 0; top: 0; width: 33px; padding: 10px 0 12px; display: flex; flex-direction: column; align-items: center; gap: 5px; background: #9b9da2; border: 1px solid #c3c5ca; border-right: 0; }
.two { width: 24px; height: 22px; margin: 1px 0; background: #8397ae; border: 1px solid #44525f; font-size: 9px; font-weight: 700; color: #2f3a48; align-items: flex-end; justify-content: flex-end; line-height: 10px; padding-right: 2px; }
.ink { border-top-color: #2f3a48; }
.vtools hr { width: 23px; margin: 0; border: 0; border-top: 1px solid #666; }
.hsplit { height: 4px; flex: none; display: flex; justify-content: center; background: #fff; }
.hsplit button { width: 100px; height: 4px; background: #5f6b77; }

/* rebar editor */
.edit { flex: none; background: #eee; padding-bottom: 9px; }
.ebox { margin: 8px 9px 0 8px; border: 1px solid #c3c5ca; background: #eee; }
.etools { height: 29px; display: flex; align-items: center; gap: 10px; padding-left: 4px; border-bottom: 1px solid #b8babd; color: #333; white-space: nowrap; }
.etools button { gap: 4px; }
.etools .dim-b { color: #aaa; }
.ewrap { display: flex; background: #fff; height: 203px; }
.escroll { flex: 1; overflow: hidden; background: linear-gradient(#eee 21px, #fff 21px); }
.etab { width: 1346px; }
.etab th, .etab td { height: 46px; padding: 0 0 0 3px; line-height: 14px; text-align: left; font-weight: 400; border: 1px solid #c9cbcd; border-width: 0 1px 1px 0; }
.etab td { background: #ccffda; font-family: "Liberation Mono", "Noto Sans CJK SC", monospace; }
.etab .n { font-family: "DejaVu Sans Mono", monospace; font-size: 10px; white-space: nowrap; }
.etab .mid-c { padding-left: 6px; }
.etab thead th { height: 21px; padding: 0; line-height: 20px; text-align: center; white-space: nowrap; background: #eee; color: #333; }
.etab tbody th { padding: 0; background: #eee; overflow: hidden; }
.etab thead .sel, .etab tbody .sel { background: #7db7fb; color: #fff; font-weight: 500; }
.etab .cur { font-family: inherit; border-right: 2px solid #808080; border-bottom: 2px solid #808080; }
.etab .clip { height: 20px; overflow: hidden; display: flex; align-items: center; white-space: normal; line-height: 14px; }
.etab .g svg { width: 10px; height: 10px; margin: 2px 0 0 3px; }
.etab .fig { padding: 0; }
.red { fill: #f00; }
.fig text { font: 12px "Noto Sans", sans-serif; text-anchor: middle; }
.fig .big { font-size: 17px; }
.c0 { width: 6px; }
.c1 { width: 72px; }
.c2 { width: 56px; }
.c3 { width: 37px; }
.c4 { width: 32px; }
.c5 { width: 216px; }
.c6 { width: 166px; }
.c7 { width: 62px; }
.c9 { width: 40px; }
.c10 { width: 48px; }
.c11 { width: 61px; }
.c12 { width: 71px; }
.c13 { width: 74px; }
.c14 { width: 156px; }
.c15 { width: 81px; }
.ewrap .gutter { flex: none; width: 13px; padding: 14px 0 74px; }

/* status bar and taskbar */
.status { flex: none; height: 30px; display: flex; align-items: center; gap: 4px; padding: 0 36px 0 2px; background: #dddddf; color: #333; }
.status > span { margin-right: -4px; white-space: nowrap; }
.s1 { width: 263px; }
.s2 { width: 83px; }
.s3 { width: 133px; }
.s4 { width: 103px; }
.status button { height: 25px; padding: 0 4px; gap: 4px; border: 1px solid #999; background: #c9cacc; }
.status .word { padding: 0 5px; }
.status .on { background: #fff; border-color: #4d9bf5; }
.status .fps { margin: 0 0 0 auto; }

.taskbar { flex: none; height: 8px; overflow: hidden; display: flex; gap: 4px; border-top: 1px solid #0a1530; background: linear-gradient(90deg, #0c1c50 35%, #123070 45%, #2a5a9c 70%, #1c3f78 88%, #0a1c40 92%); }
.orb { width: 58px; background: radial-gradient(ellipse 15px 8px at 27px 8px, #8fb4cc 80%, #10184a 85%); }
.task { width: 158px; background: linear-gradient(90deg, #7a7a9c, #4a5080); border: 1px solid #b0b4cc; border-bottom: 0; }
.blue { background: linear-gradient(90deg, #fff0 9px, #5a9cf5 9px 38px, #fff0 38px), linear-gradient(#d0d4e4, #8f94b4); }
.green { background: linear-gradient(90deg, #fff0 9px, #05c850 9px 38px, #fff0 38px), linear-gradient(#8085a5, #4a5080); }
.ring { background: radial-gradient(ellipse 14px 8px at 24px 8px, #b8ddf2 80%, #fff0 85%), linear-gradient(#8085a5, #4a6090); }
.taskbar time { margin: 4px 40px 0 auto; color: #fff; line-height: 12px; }
.peek { width: 12px; background: #5f7ba8; border: 1px solid #a8bcd8; margin-left: -4px; }

/* floating network meter */
.meter { position: absolute; right: 47px; bottom: 53px; display: flex; align-items: center; }
.rates { width: 76px; height: 42px; margin-right: -16px; border-radius: 20px 0 0 20px; background: #363a44; color: #fff; box-shadow: 0 0 4px #0006; overflow: hidden; }
.rates p { height: 21px; display: flex; align-items: center; justify-content: flex-end; padding: 0 21px 0 0; border-bottom: 1px solid #2b2e36; }
.rates b { margin: 0 auto 0 10px; }
.rates small { color: #999; font-size: 9px; }
.up { color: #4db8f0; }
.down { color: #3cb043; }
.dial { position: relative; width: 60px; height: 60px; border-radius: 50%; background: #555a68; box-shadow: 0 0 4px #0006; }
.dial span { position: absolute; inset: 0; line-height: 58px; text-align: center; color: #fff; font: 300 24px/58px Roboto, sans-serif; }
.dial small { font-size: 9px; }
```
